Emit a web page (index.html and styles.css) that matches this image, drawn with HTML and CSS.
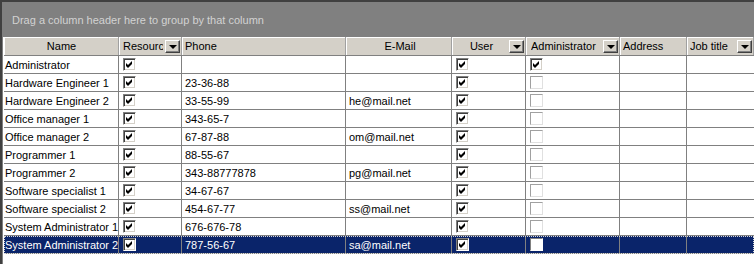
FILE: index.html
```html
<!DOCTYPE html>
<html lang="en">
<head>
  <meta charset="UTF-8">
  <title>Users grid</title>
  <link rel="stylesheet" href="styles.css">
</head>
<body>
  <div class="grid">
    <div class="group-panel">Drag a column header here to group by that column</div>

    <div class="row head">
      <div class="cell center">Name</div>
      <div class="cell drop"><span class="clip">Resource</span><span class="btn"></span></div>
      <div class="cell">Phone</div>
      <div class="cell center">E-Mail</div>
      <div class="cell drop"><span class="clip center">User</span><span class="btn"></span></div>
      <div class="cell drop"><span class="clip">Administrator</span><span class="btn"></span></div>
      <div class="cell">Address</div>
      <div class="cell drop"><span class="clip">Job title</span><span class="btn"></span></div>
    </div>

    <div class="row">
      <div class="cell">Administrator</div>
      <div class="cell"><span class="cb on"></span></div>
      <div class="cell"></div>
      <div class="cell"></div>
      <div class="cell"><span class="cb on"></span></div>
      <div class="cell"><span class="cb on"></span></div>
      <div class="cell"></div>
      <div class="cell"></div>
    </div>
    <div class="row">
      <div class="cell">Hardware Engineer 1</div>
      <div class="cell"><span class="cb on"></span></div>
      <div class="cell">23-36-88</div>
      <div class="cell"></div>
      <div class="cell"><span class="cb on"></span></div>
      <div class="cell"><span class="cb off"></span></div>
      <div class="cell"></div>
      <div class="cell"></div>
    </div>
    <div class="row">
      <div class="cell">Hardware Engineer 2</div>
      <div class="cell"><span class="cb on"></span></div>
      <div class="cell">33-55-99</div>
      <div class="cell">he@mail.net</div>
      <div class="cell"><span class="cb on"></span></div>
      <div class="cell"><span class="cb off"></span></div>
      <div class="cell"></div>
      <div class="cell"></div>
    </div>
    <div class="row">
      <div class="cell">Office manager 1</div>
      <div class="cell"><span class="cb on"></span></div>
      <div class="cell">343-65-7</div>
      <div class="cell"></div>
      <div class="cell"><span class="cb on"></span></div>
      <div class="cell"><span class="cb off"></span></div>
      <div class="cell"></div>
      <div class="cell"></div>
    </div>
    <div class="row">
      <div class="cell">Office manager 2</div>
      <div class="cell"><span class="cb on"></span></div>
      <div class="cell">67-87-88</div>
      <div class="cell">om@mail.net</div>
      <div class="cell"><span class="cb on"></span></div>
      <div class="cell"><span class="cb off"></span></div>
      <div class="cell"></div>
      <div class="cell"></div>
    </div>
    <div class="row">
      <div class="cell">Programmer 1</div>
      <div class="cell"><span class="cb on"></span></div>
      <div class="cell">88-55-67</div>
      <div class="cell"></div>
      <div class="cell"><span class="cb on"></span></div>
      <div class="cell"><span class="cb off"></span></div>
      <div class="cell"></div>
      <div class="cell"></div>
    </div>
    <div class="row">
      <div class="cell">Programmer 2</div>
      <div class="cell"><span class="cb on"></span></div>
      <div class="cell">343-88777878</div>
      <div class="cell">pg@mail.net</div>
      <div class="cell"><span class="cb on"></span></div>
      <div class="cell"><span class="cb off"></span></div>
      <div class="cell"></div>
      <div class="cell"></div>
    </div>
    <div class="row">
      <div class="cell">Software specialist 1</div>
      <div class="cell"><span class="cb on"></span></div>
      <div class="cell">34-67-67</div>
      <div class="cell"></div>
      <div class="cell"><span class="cb on"></span></div>
      <div class="cell"><span class="cb off"></span></div>
      <div class="cell"></div>
      <div class="cell"></div>
    </div>
    <div class="row">
      <div class="cell">Software specialist 2</div>
      <div class="cell"><span class="cb on"></span></div>
      <div class="cell">454-67-77</div>
      <div class="cell">ss@mail.net</div>
      <div class="cell"><span class="cb on"></span></div>
      <div class="cell"><span class="cb off"></span></div>
      <div class="cell"></div>
      <div class="cell"></div>
    </div>
    <div class="row">
      <div class="cell">System Administrator 1</div>
      <div class="cell"><span class="cb on"></span></div>
      <div class="cell">676-676-78</div>
      <div class="cell"></div>
      <div class="cell"><span class="cb on"></span></div>
      <div class="cell"><span class="cb off"></span></div>
      <div class="cell"></div>
      <div class="cell"></div>
    </div>
    <div class="row selected">
      <div class="cell">System Administrator 2</div>
      <div class="cell"><span class="cb on"></span></div>
      <div class="cell">787-56-67</div>
      <div class="cell">sa@mail.net</div>
      <div class="cell"><span class="cb on"></span></div>
      <div class="cell"><span class="cb off"></span></div>
      <div class="cell"></div>
      <div class="cell"></div>
    </div>
  </div>
</body>
</html>
```

FILE: styles.css
```css
* {
  margin: 0;
  padding: 0;
  box-sizing: border-box;
}

body {
  background: #fff;
  font-family: 'Liberation Sans', Arial, sans-serif;
  font-size: 11px;
  color: #000;
}

.grid {
  width: 754px;
  height: 264px;
  border-left: 2px solid #404040;
  padding-left: 2px;
  background: #fff;
  box-shadow: inset 1px 0 #808080;
}

.group-panel {
  height: 37px;
  margin-left: -2px;
  padding: 12px 0 0 10px;
  background: #808080;
  border-top: 2px solid #404040;
  color: #d2d2d2;
}

.row {
  display: grid;
  grid-template-columns: 115px 63px 164px 106px 74px 94px 67px 1fr;
  height: 18px;
  border-bottom: 1px solid #808080;
}

.cell {
  display: flex;
  align-items: center;
  padding-left: 1px;
  border-right: 1px solid #808080;
  white-space: nowrap;
  overflow: hidden;
}

.cell:last-child {
  border-right: none;
}

.center {
  justify-content: center;
}

.head {
  height: 19px;
  background: #d4d0c8;
  border-bottom: 1px solid #808080;
  box-shadow: inset 0 1px #fff;
}

.head .cell {
  padding-left: 3px;
  border-right: 1px solid #a0a0a0;
  box-shadow: inset 1px 0 #fff;
}

.head .cell.center {
  padding-left: 0;
}

.drop {
  gap: 2px;
  padding-right: 1px;
}

.clip {
  flex: 1;
  display: flex;
  overflow: hidden;
}

.btn {
  flex: none;
  width: 15px;
  height: 13px;
  background: #d4d0c8;
  border-top: 1px solid #fff;
  border-left: 1px solid #fff;
  border-right: 1px solid #404040;
  border-bottom: 1px solid #404040;
  box-shadow: inset -1px -1px #808080;
  position: relative;
}

.btn::after {
  content: "";
  position: absolute;
  left: 3px;
  top: 4px;
  border-left: 4px solid transparent;
  border-right: 4px solid transparent;
  border-top: 4px solid #000;
}

.row .cell:nth-child(1) {
  padding-left: 1px;
}

.row .cell:nth-child(3),
.row .cell:nth-child(4) {
  padding-left: 3px;
}

.row .cell:nth-child(2),
.row .cell:nth-child(5),
.row .cell:nth-child(6) {
  padding-left: 4px;
}

.head .cell:nth-child(3),
.head .cell:nth-child(7),
.head .cell:nth-child(8) {
  padding-left: 3px;
}

.head .cell:nth-child(6) {
  padding-left: 5px;
}

.cb {
  display: block;
  width: 13px;
  height: 13px;
  background: #fff;
}

.cb.on {
  border-top: 1px solid #808080;
  border-left: 1px solid #808080;
  border-right: 1px solid #fff;
  border-bottom: 1px solid #fff;
  box-shadow: inset 1px 1px #404040, inset -1px -1px #d4d0c8;
  background: #fff url("data:image/svg+xml,%3Csvg xmlns='http://www.w3.org/2000/svg' width='11' height='11'%3E%3Cpath d='M2 4L4 6L8 2V5L4 9L2 7Z' fill='%23000'/%3E%3C/svg%3E") no-repeat 0 0;
}

.cb.off {
  border-top: 1px solid #a0a0a0;
  border-left: 1px solid #a0a0a0;
  border-right: 1px solid #e0e0e0;
  border-bottom: 1px solid #e0e0e0;
}

.selected {
  background: #0a246a;
  color: #fff;
  outline: 1px dotted #d8d8d8;
  outline-offset: -1px;
}

.selected .cb.off {
  border-color: #808080 #fff #fff #808080;
}
```
